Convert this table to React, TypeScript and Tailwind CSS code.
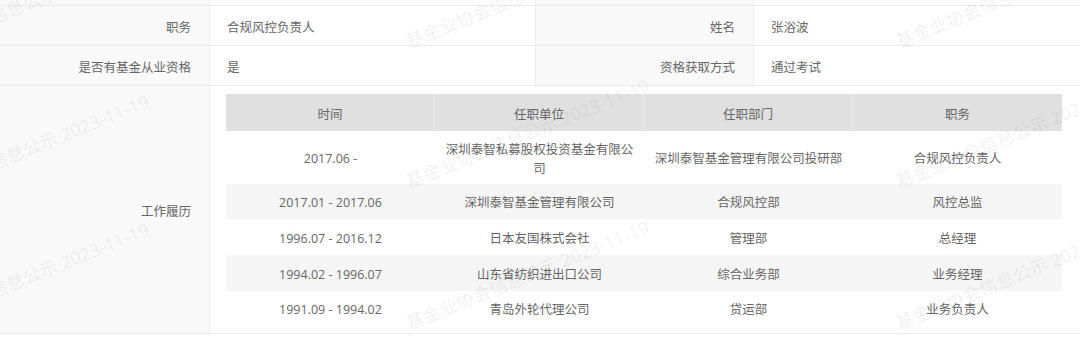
import React from "react";

const rows = [
  { t: "2017.06 -", u: "深圳泰智私募股权投资基金有限公司", d: "深圳泰智基金管理有限公司投研部", p: "合规风控负责人", h: "h-[53px]", bg: "bg-white" },
  { t: "2017.01 - 2017.06", u: "深圳泰智基金管理有限公司", d: "合规风控部", p: "风控总监", h: "h-[35px]", bg: "bg-[#f5f5f5]" },
  { t: "1996.07 - 2016.12", u: "日本友国株式会社", d: "管理部", p: "总经理", h: "h-[36px]", bg: "bg-white" },
  { t: "1994.02 - 1996.07", u: "山东省纺织进出口公司", d: "综合业务部", p: "业务经理", h: "h-[36px]", bg: "bg-[#f5f5f5]" },
  { t: "1991.09 - 1994.02", u: "青岛外轮代理公司", d: "贷运部", p: "业务负责人", h: "h-[35px]", bg: "bg-white" },
];

const marks = [
  { x: -90, y: 60 }, { x: 410, y: 50 }, { x: 900, y: 50 },
  { x: -90, y: 206 }, { x: 410, y: 190 }, { x: 900, y: 190 },
  { x: -90, y: 334 }, { x: 410, y: 332 }, { x: 900, y: 332 },
];

export default function App() {
  return (
    <div
      className="relative w-[1080px] h-[338px] overflow-hidden bg-white text-[12.5px] text-[#666]"
      style={{ fontFamily: '"Open Sans", "Noto Sans CJK SC", sans-serif' }}
    >
      {/* partial top row */}
      <div className="flex h-[6px] border-b border-[#ececec]">
        <div className="w-[210px] bg-[#f9f9f9] border-r border-[#ececec]" />
        <div className="w-[326px] border-r border-[#ececec]" />
        <div className="w-[218px] bg-[#f9f9f9] border-r border-[#ececec]" />
        <div className="flex-1" />
      </div>
      {[
        ["职务", "合规风控负责人", "姓名", "张浴波"],
        ["是否有基金从业资格", "是", "资格获取方式", "通过考试"],
      ].map((r, i) => (
        <div key={i} className="flex h-[40px] border-b border-[#ececec]">
          <div className="w-[210px] bg-[#f9f9f9] border-r border-[#ececec] flex items-center justify-end pr-[18px] pt-[5px]">{r[0]}</div>
          <div className="w-[326px] border-r border-[#ececec] flex items-center pl-[17px] pt-[5px]">{r[1]}</div>
          <div className="w-[218px] bg-[#f9f9f9] border-r border-[#ececec] flex items-center justify-end pr-[18px] pt-[5px]">{r[2]}</div>
          <div className="flex-1 flex items-center pl-[17px] pt-[5px]">{r[3]}</div>
        </div>
      ))}
      <div className="flex h-[248px] border-b border-[#ececec]">
        <div className="w-[210px] bg-[#f9f9f9] border-r border-[#ececec] flex items-center justify-end pr-[18px] pt-[5px]">工作履历</div>
        <div className="flex-1 pt-[8px] pl-[16px]">
          <div className="w-[836px]">
            <div className="grid grid-cols-4 h-[37px] bg-[#e0e0e0]">
              {["时间", "任职单位", "任职部门", "职务"].map((h, i) => (
                <div key={h} className={`flex items-center justify-center pt-[5px] ${i < 3 ? "border-r border-[#ececec]" : ""}`}>{h}</div>
              ))}
            </div>
            {rows.map((r) => (
              <div key={r.t} className={`grid grid-cols-4 ${r.h} ${r.bg}`}>
                {[r.t, r.u, r.d, r.p].map((c, j) => (
                  <div key={j} className="flex items-center justify-center text-center px-[10px] pt-[2px] leading-[19px]">{c}</div>
                ))}
              </div>
            ))}
          </div>
        </div>
      </div>
      {/* watermarks */}
      <div className="pointer-events-none absolute inset-0">
        {marks.map((m, i) => (
          <div
            key={i}
            className="absolute whitespace-nowrap text-[18px] text-[rgba(0,0,0,0.07)] origin-bottom-left -rotate-[22deg] leading-none"
            style={{ left: m.x, top: m.y - 18 }}
          >
            基金业协会信息公示 2023-11-19
          </div>
        ))}
      </div>
    </div>
  );
}
